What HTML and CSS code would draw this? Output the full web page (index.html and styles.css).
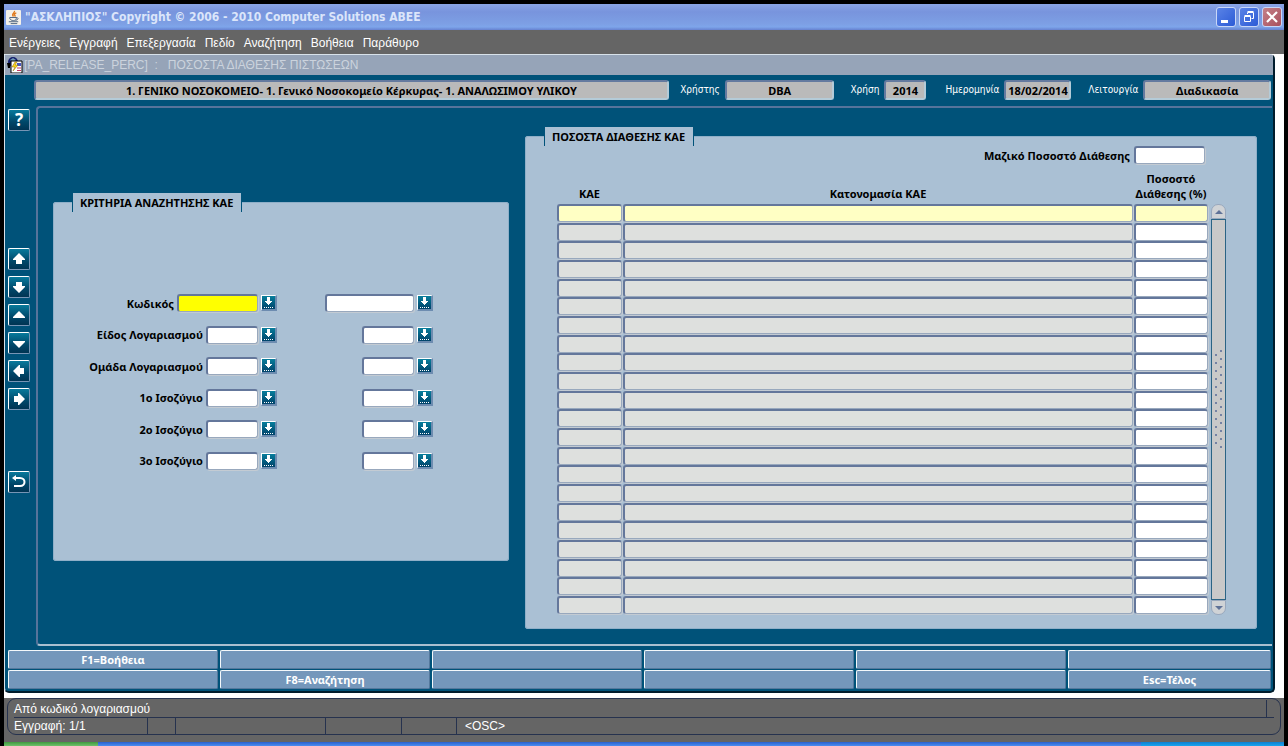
FILE: index.html
```html
<!DOCTYPE html>
<html lang="el">
<head>
    <meta charset="UTF-8">
    <meta name="viewport" content="width=device-width, initial-scale=1.0">
    <title>"ΑΣΚΛΗΠΙΟΣ" Copyright © 2006 - 2010 Computer Solutions ABEE</title>
    <link rel="stylesheet" href="styles.css">
</head>
<body>
    <!-- shared icons -->
    <svg class="defs" width="0" height="0">
        <symbol id="lookup" viewBox="0 0 13 13"><path d="M5 1h3v4h2v1h-1v1h-1v1h-1v1h-1v-1h-1v-1h-1v-1h-1v-1h2z M2 11h1v1h-1z M4 11h1v1h-1z M6 11h1v1h-1z M8 11h1v1h-1z M10 11h1v1h-1z"/></symbol>
        <symbol id="arrow-up" viewBox="0 0 12 12"><path d="M6 0l6 6v1h-3v4h-6v-4h-3v-1z"/></symbol>
    </svg>

    <header class="titlebar">
        <svg class="java" viewBox="0 0 16 16">
            <rect width="16" height="16" rx="1" fill="#f4f1ea"/>
            <path d="M9 1c1 2-4 3-1 6M11 3c-3 1-2 2-1 4" fill="none" stroke="#e07a1c" stroke-width="1.5"/>
            <path d="M4 8h7v1c0 3-6 3-7 0zM11 8c3 0 2 3-1 3" fill="none" stroke="#47607e"/>
            <path d="M3 12.500h10M5 14.500h7" stroke="#47607e"/>
        </svg>
        <h1>"ΑΣΚΛΗΠΙΟΣ" Copyright © 2006 - 2010 Computer Solutions ABEE</h1>
        <button class="win-btn" aria-label="Ελαχιστοποίηση"><svg viewBox="0 0 18 18"><path d="M4 12h7v3h-7z" fill="#fff"/></svg></button>
        <button class="win-btn" aria-label="Επαναφορά"><svg viewBox="0 0 18 18" fill="none" stroke="#fff"><path d="M4.500 8.500h6v5h-6zM4.500 7.500h6M7.500 6v-1.500h6v6h-2M7.500 3.500h6"/></svg></button>
        <button class="win-btn close" aria-label="Κλείσιμο"><svg viewBox="0 0 18 18"><path d="M4 4l10 10M14 4L4 14" stroke="#fff" stroke-width="2.200"/></svg></button>
    </header>

    <nav class="menu">
        <a href="#">Ενέργειες</a>
        <a href="#">Εγγραφή</a>
        <a href="#">Επεξεργασία</a>
        <a href="#">Πεδίο</a>
        <a href="#">Αναζήτηση</a>
        <a href="#">Βοήθεια</a>
        <a href="#">Παράθυρο</a>
    </nav>

    <div class="workspace">
        <div class="window">
            <div class="window-title">
                <svg viewBox="0 0 16 16">
                    <circle cx="6" cy="5" r="5" fill="#14206e"/>
                    <path d="M3 3l3-2 3 2-2 2z" fill="#6f9bb8"/>
                    <path d="M0 6h3v5h-2z" fill="#000"/>
                    <path d="M4 4h11v12h-11z" fill="#fff" stroke="#000"/>
                    <path d="M10 6h4v3h-4z" fill="#4757c4"/>
                    <path d="M10 11h4M10 13.500h4" stroke="#c23b62"/>
                    <path d="M8 5l-3 5h3l-2 4 5-6h-3l2-3z" fill="#ffd91c" stroke="#8c6a00" stroke-width=".5"/>
                </svg>
                <h2>[PA_RELEASE_PERC] &nbsp;: &nbsp; ΠΟΣΟΣΤΑ ΔΙΑΘΕΣΗΣ ΠΙΣΤΩΣΕΩΝ</h2>
            </div>

            <div class="info">
                <input type="text" aria-label="Φορέας" value="1. ΓΕΝΙΚΟ ΝΟΣΟΚΟΜΕΙΟ- 1. Γενικό Νοσοκομείο Κέρκυρας- 1. ΑΝΑΛΩΣΙΜΟΥ ΥΛΙΚΟΥ" readonly>
                <label for="user">Χρήστης</label>
                <input type="text" id="user" value="DBA" readonly>
                <label for="year">Χρήση</label>
                <input type="text" id="year" value="2014" readonly>
                <label for="date">Ημερομηνία</label>
                <input type="text" id="date" value="18/02/2014" readonly>
                <label for="mode">Λειτουργία</label>
                <input type="text" id="mode" value="Διαδικασία" readonly>
            </div>

            <div class="main">
                <div class="toolbar">
                    <div class="group">
                        <button class="help" aria-label="Βοήθεια">?</button>
                    </div>
                    <div class="group">
                        <button aria-label="Προηγούμενο"><svg viewBox="0 0 12 12"><use href="#arrow-up"/></svg></button>
                        <button aria-label="Επόμενο"><svg class="down" viewBox="0 0 12 12"><use href="#arrow-up"/></svg></button>
                        <button aria-label="Πάνω"><svg viewBox="0 0 12 12"><path d="M6 2l6 6v1h-12v-1z"/></svg></button>
                        <button aria-label="Κάτω"><svg viewBox="0 0 12 12"><path d="M0 4h12v1l-6 6-6-6z"/></svg></button>
                        <button aria-label="Αριστερά"><svg class="left" viewBox="0 0 12 12"><use href="#arrow-up"/></svg></button>
                        <button aria-label="Δεξιά"><svg class="right" viewBox="0 0 12 12"><use href="#arrow-up"/></svg></button>
                    </div>
                    <div class="group">
                        <button aria-label="Επιστροφή"><svg class="back" viewBox="0 0 14 14"><path d="M0 3l4-3v6z"/><path d="M3 3h5c6 0 6 8 0 8h-6" fill="none" stroke="#fff" stroke-width="2"/></svg></button>
                    </div>
                </div>

                <div class="canvas">
                    <fieldset class="criteria">
                        <legend>ΚΡΙΤΗΡΙΑ ΑΝΑΖΗΤΗΣΗΣ ΚΑΕ</legend>
                        <div class="rows" id="criteria-rows"></div>
                    </fieldset>

                    <fieldset class="percents">
                        <legend>ΠΟΣΟΣΤΑ ΔΙΑΘΕΣΗΣ ΚΑΕ</legend>
                        <div class="mass">
                            <label for="mass">Μαζικό Ποσοστό Διάθεσης</label>
                            <input type="text" id="mass">
                        </div>
                        <div class="list">
                            <table>
                                <thead>
                                    <tr>
                                        <th class="code">ΚΑΕ</th>
                                        <th>Κατονομασία ΚΑΕ</th>
                                        <th class="percent">Ποσοστό Διάθεσης&nbsp;(%)</th>
                                    </tr>
                                </thead>
                                <tbody id="kae-rows"></tbody>
                            </table>
                            <div class="scrollbar">
                                <button aria-label="Κύλιση πάνω"><svg viewBox="0 0 8 4"><path d="M4 0l4 4H0z"/></svg></button>
                                <div class="thumb"><span class="grip"></span></div>
                                <button aria-label="Κύλιση κάτω"><svg viewBox="0 0 8 4"><path d="M0 0h8L4 4z"/></svg></button>
                            </div>
                        </div>
                    </fieldset>
                </div>
            </div>

            <div class="keys">
                <button>F1=Βοήθεια</button>
                <button aria-label="F2"></button>
                <button aria-label="F3"></button>
                <button aria-label="F4"></button>
                <button aria-label="F5"></button>
                <button aria-label="F6"></button>
                <button aria-label="F7"></button>
                <button>F8=Αναζήτηση</button>
                <button aria-label="F9"></button>
                <button aria-label="F10"></button>
                <button aria-label="F11"></button>
                <button>Esc=Τέλος</button>
            </div>
        </div>
    </div>

    <footer class="status">
        <div class="status-box">
            <div class="message"><span>Από κωδικό λογαριασμού</span></div>
            <div class="record">
                <span>Εγγραφή: 1/1</span>
                <span></span>
                <span></span>
                <span></span>
                <span></span>
                <span>&lt;OSC&gt;</span>
            </div>
        </div>
    </footer>
    <div class="taskbar"><span class="start"></span><span class="tasks"></span><span class="tray"></span></div>

    <script>
        const criteria = ['Κωδικός', 'Είδος Λογαριασμού', 'Ομάδα Λογαριασμού', '1ο Ισοζύγιο', '2ο Ισοζύγιο', '3ο Ισοζύγιο'];
        const lookup = '<button class="lookup" aria-label="Λίστα τιμών"><svg viewBox="0 0 13 13"><use href="#lookup"/></svg></button>';

        document.getElementById('criteria-rows').innerHTML = criteria.map((name, i) => `
            <div class="row">
                <div class="from">
                    <label for="from-${i}">${name}</label>
                    <input type="text" id="from-${i}">${lookup}
                </div>
                <div class="to">
                    <input type="text" aria-label="${name} έως">${lookup}
                </div>
            </div>`).join('');

        let rows = '';
        for (let i = 1; i <= 22; i++) {
            rows += `<tr>
                <td><input type="text" aria-label="ΚΑΕ ${i}" readonly></td>
                <td><input type="text" aria-label="Κατονομασία ${i}" readonly></td>
                <td><input type="text" aria-label="Ποσοστό ${i}"></td>
            </tr>`;
        }
        document.getElementById('kae-rows').innerHTML = rows;
    </script>
</body>
</html>
```
FILE: styles.css
```css
* {
    box-sizing: border-box;
}

body {
    margin: 0;
    padding: 4px 4px 0;
    min-height: 100vh;
    display: flex;
    flex-direction: column;
    background: #000;
    color: #000;
    font: bold 11px/15px "Noto Sans", sans-serif;
}

h1, h2 {
    margin: 0;
}

button, input {
    font: inherit;
    margin: 0;
    padding: 0;
}

.defs {
    position: absolute;
}

/* title bar */
.titlebar {
    display: flex;
    align-items: center;
    gap: 3px;
    height: 26px;
    padding: 0 2px;
    background: linear-gradient(#8aa5e6, #7894dd 30%, #7d9fe4 75%, #7ea5ea 88%, #6681d0);
}

.titlebar h1 {
    flex: 1;
    padding-left: 1px;
    font: bold 12px/16px "DejaVu Sans Condensed", "Noto Sans", sans-serif;
    color: #dbe5fa;
}

.java {
    width: 15px;
    height: 15px;
}

.win-btn {
    width: 20px;
    height: 20px;
    border: 1px solid #c9d7f8;
    border-radius: 3px;
    background: linear-gradient(135deg, #5a83e6, #2c5bd6);
}

.win-btn svg {
    display: block;
    width: 18px;
    height: 18px;
}

.win-btn.close {
    background: linear-gradient(135deg, #c48088, #a9505c);
}

/* menu */
.menu {
    display: flex;
    gap: 9px;
    height: 24px;
    padding: 0 5px;
    background: #656565;
}

.menu a {
    color: #fff;
    text-decoration: none;
    font: 12px/26px "Liberation Sans", Arial, sans-serif;
}

/* form window */
.workspace {
    flex: 1;
    display: flex;
    padding: 0 9px 5px 0;
    background: #fff;
}

.window {
    flex: 1;
    display: flex;
    flex-direction: column;
    border: 1px solid #d8e2ea;
    border-right: 2px solid #001c2c;
    border-bottom: 2px solid #001c2c;
    border-radius: 2px 5px 5px 5px;
    background: #005279;
}

.window-title {
    display: flex;
    align-items: center;
    height: 20px;
    padding-left: 2px;
    background: #96a4b8;
}

.window-title svg {
    width: 16px;
    height: 16px;
}

.window-title h2 {
    padding-left: 1px;
    font: 12px/18px "Liberation Sans", Arial, sans-serif;
    color: #cbd3dd;
}

.info {
    display: grid;
    grid-template-columns: minmax(0, 637fr) 56px minmax(0, 110fr) 50px 42px 78px 67px 72px minmax(0, 128fr);
    height: 20px;
    margin: 5px 2px 6px 29px;
}

.info input {
    min-width: 0;
    width: 100%;
    border: 2px solid #647a9f;
    border-right-color: #b4cbd8;
    border-bottom-color: #b4cbd8;
    border-radius: 3px;
    background: #bababa;
    color: #000;
    text-align: center;
}

.info label {
    padding-right: 5px;
    text-align: right;
    font: 10px/20px "DejaVu Sans Condensed", "Noto Sans", sans-serif;
    color: #fff;
}

.main {
    flex: 1;
    display: flex;
    gap: 6px;
    padding: 0 1px 0 3px;
}

.toolbar {
    display: flex;
    flex-direction: column;
    padding-top: 3px;
}

.group {
    display: flex;
    flex-direction: column;
    gap: 6px;
}

.group:nth-child(2) {
    margin-top: 117px;
}

.group:nth-child(3) {
    margin-top: 61px;
}

.toolbar button {
    display: flex;
    align-items: center;
    justify-content: center;
    width: 22px;
    height: 22px;
    border: 1px solid #fff;
    border-right-color: #7795b5;
    border-bottom-color: #7795b5;
    border-radius: 2px;
    background: linear-gradient(#087a9c, #004769 60%, #003453);
    color: #fff;
}

.toolbar button.help {
    font: bold 17px/18px "Noto Sans", sans-serif;
}

.toolbar svg {
    width: 12px;
    height: 12px;
    fill: #fff;
}

.toolbar svg.back {
    width: 14px;
    height: 14px;
}

svg.down {
    transform: rotate(180deg);
}

svg.left {
    transform: rotate(-90deg);
}

svg.right {
    transform: rotate(90deg);
}

.canvas {
    flex: 1;
    display: grid;
    grid-template-columns: minmax(0, 456fr) minmax(0, 732fr);
    gap: 16px;
    align-items: start;
    padding: 19px 15px 14px;
    border: 2px solid #56749b;
    border-right: 0;
    border-bottom-color: #a9bfd0;
    border-radius: 4px 0 0 4px;
}

fieldset {
    margin: 0;
    padding: 0;
    min-width: 0;
    border: 1px solid #8fafc8;
    border-radius: 3px;
    background: #aac0d4;
}

legend {
    height: 19px;
    margin-left: 18px;
    padding: 2px 8px 0 7px;
    border: 1px solid #005279;
    border-width: 0 1px;
    background: #aac0d4;
    line-height: 16px;
}

.criteria {
    margin-top: 66px;
    padding: 82px 0 90px;
}

.rows {
    display: flex;
    flex-direction: column;
    justify-content: space-between;
    height: 176px;
}

.row {
    display: flex;
}

.from, .to {
    display: flex;
    align-items: center;
    justify-content: flex-end;
    gap: 3px;
}

.from {
    width: 223px;
}

.to {
    width: 156px;
}

.row input, .mass input, td input {
    height: 18px;
    border: 2px solid #64779b;
    border-right: 1px solid #98a8bd;
    border-bottom: 1px solid #98a8bd;
    border-radius: 3px;
    background: #fff;
    box-shadow: 1px 1px 0 #c3cbd3;
}

.row input {
    width: 52px;
}

.row:first-child .from input {
    width: 81px;
    background: #ff0;
}

.row:first-child .to input {
    width: 89px;
}

.lookup {
    width: 16px;
    height: 16px;
    border: 1px solid #fff;
    border-right: 2px solid #6d8cb0;
    border-bottom: 2px solid #6d8cb0;
    background: linear-gradient(#087e9c, #00436a);
}

.lookup svg {
    display: block;
    width: 13px;
    height: 13px;
    fill: #fff;
}

.percents {
    padding-bottom: 13px;
}

.mass {
    display: flex;
    align-items: center;
    justify-content: flex-end;
    gap: 4px;
    padding-right: 51px;
}

.mass input {
    width: 71px;
}

.list {
    display: flex;
    align-items: flex-end;
    gap: 2px;
    margin-top: 7px;
    padding: 0 30px 0 31px;
}

table {
    flex: 1;
    height: 444px;
    border-collapse: collapse;
    table-layout: fixed;
}

thead tr {
    height: 33px;
}

th {
    padding: 0 1px 3px 0;
    vertical-align: bottom;
}

th.code {
    width: 66px;
}

th.percent {
    width: 75px;
}

td {
    padding: 0 1px 0 0;
    vertical-align: top;
}

td input {
    display: block;
    width: 100%;
    background: #dee0de;
}

td:last-child input {
    background: #fff;
}

tbody tr:first-child input {
    background: #ffffc4;
}

.scrollbar {
    display: flex;
    flex-direction: column;
    width: 15px;
    height: 411px;
}

.scrollbar button {
    height: 15px;
    border: 1px solid #98a8bd;
    border-radius: 7px 7px 0 0;
    background: #d0d3d6;
}

.scrollbar button:last-child {
    border-radius: 0 0 7px 7px;
}

.scrollbar svg {
    display: block;
    width: 8px;
    height: 4px;
    margin: 0 auto;
    fill: #5f7297;
}

.thumb {
    flex: 1;
    display: flex;
    align-items: center;
    justify-content: center;
    padding-bottom: 21px;
    border: 1px solid #2b6485;
    background: #c9c9c9;
}

.grip {
    width: 8px;
    height: 98px;
    background: radial-gradient(circle at 6px 1px, #7482a4 1px, transparent 1px) 0 0 / 8px 8px,
                radial-gradient(circle at 1px 5px, #7482a4 1px, transparent 1px) 0 0 / 8px 8px;
}

/* function keys */
.keys {
    display: grid;
    grid-template-columns: repeat(5, minmax(0, 210fr)) minmax(0, 203fr);
    gap: 1px 2px;
    padding: 4px 2px 2px 3px;
}

.keys button {
    height: 19px;
    border: 1px solid #f4f8fb;
    border-right-color: #54789c;
    border-bottom-color: #54789c;
    border-radius: 2px;
    background: #7497bb;
    color: #fff;
}

/* status line */
.status {
    padding: 0 3px 7px;
    background: #656565;
    color: #fff;
    font: 12px/18px "Liberation Sans", Arial, sans-serif;
}

.status-box {
    padding: 0 6px;
    border: 1px solid #26324e;
    border-radius: 9px;
}

.message {
    display: flex;
    height: 19px;
    padding-top: 1px;
    border-bottom: 1px solid #26324e;
}

.message span {
    flex: 1;
    margin-right: 7px;
    border-right: 1px solid #26324e;
}

.record {
    display: grid;
    grid-template-columns: 134px 28px 150px 76px 55px 1fr;
    height: 16px;
    line-height: 17px;
}

.record span {
    border-right: 1px solid #26324e;
}

.record span:last-child {
    padding-left: 8px;
    border-right: 0;
}

.taskbar {
    display: flex;
    height: 4px;
}

.start {
    width: 94px;
    background: linear-gradient(#3f9a3f, #6fc06b);
}

.tasks {
    flex: 1;
    background: linear-gradient(#2a60cc, #4a8df0);
}

.tray {
    width: 143px;
    background: linear-gradient(#0f7fd0, #18a5ee);
}
```
